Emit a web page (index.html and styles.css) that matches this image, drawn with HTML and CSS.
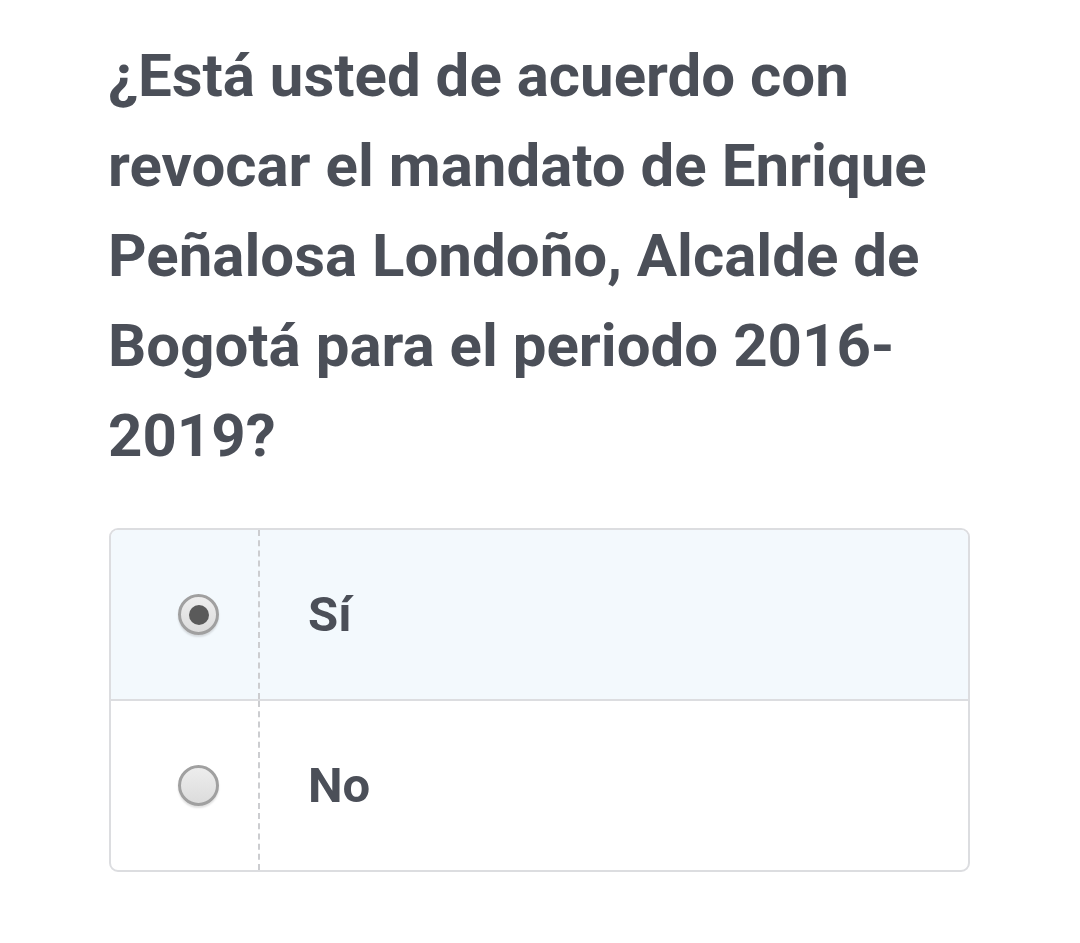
FILE: index.html
```html
<!DOCTYPE html>
<html lang="es">
<head>
<meta charset="utf-8">
<link rel="stylesheet" href="styles.css">
</head>
<body>
<main class="page">
  <h1 class="question">¿Está usted de acuerdo con revocar el mandato de Enrique Peñalosa Londoño, Alcalde de Bogotá para el periodo 2016-2019?</h1>
  <div class="options">
    <label class="option selected">
      <span class="radio-cell"><span class="radio checked"></span></span>
      <span class="label-cell">Sí</span>
    </label>
    <label class="option">
      <span class="radio-cell"><span class="radio"></span></span>
      <span class="label-cell">No</span>
    </label>
  </div>
</main>
</body>
</html>
```
FILE: styles.css
```css
html, body {
  margin: 0;
  padding: 0;
  background: #ffffff;
}
.page {
  padding: 31px 108px 0 108px;
  font-family: Roboto, "Liberation Sans", sans-serif;
  color: #4b4f58;
}
.question {
  margin: 0;
  font-size: 60px;
  line-height: 90px;
  font-weight: 700;
  max-width: 860px;
}
.options {
  margin-top: 47px;
  margin-left: 1px;
  width: 857px;
  border: 2px solid #dcdde0;
  border-radius: 9px;
  overflow: hidden;
}
.option {
  display: flex;
  height: 169px;
}
.option + .option {
  border-top: 2px solid #dcdde0;
}
.option.selected {
  background: #f3f9fd;
}
.radio-cell {
  width: 149px;
  flex: none;
  display: flex;
  align-items: center;
  padding-left: 67px;
  box-sizing: border-box;
  border-right: 2px dashed #cccdd0;
}
.label-cell {
  display: flex;
  align-items: center;
  padding-left: 48px;
  font-size: 49px;
  font-weight: 700;
}
.radio {
  width: 35px;
  height: 35px;
  border-radius: 50%;
  border: 3px solid #a0a0a0;
  background: linear-gradient(#ededed, #dcdcdc);
  box-shadow: 0 2px 2px rgba(0,0,0,0.12);
  position: relative;
}
.radio.checked::after {
  content: "";
  position: absolute;
  left: 50%;
  top: 50%;
  width: 20px;
  height: 20px;
  margin: -10px 0 0 -10px;
  border-radius: 50%;
  background: #5a5a5a;
}
```
